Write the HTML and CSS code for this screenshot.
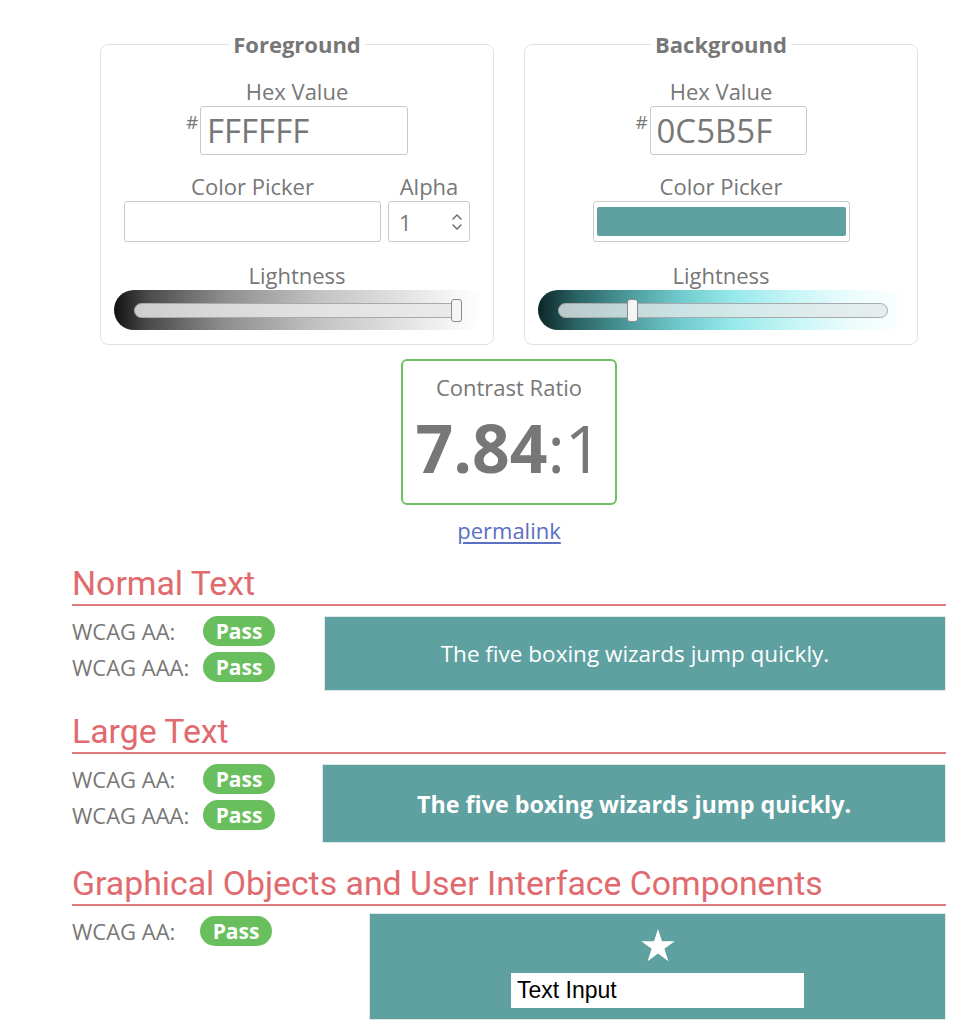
FILE: index.html
```html
<!DOCTYPE html>
<html lang="en">
<head>
<meta charset="utf-8">
<title>Contrast Checker</title>
<link rel="stylesheet" href="styles.css">
</head>
<body>
<main class="page">
  <div class="panels">
    <fieldset class="panel">
      <legend class="panel-title">Foreground</legend>
      <div class="label">Hex Value</div>
      <div class="hex-row">
        <span class="hash">#</span>
        <div class="hex-input hex-fg">FFFFFF</div>
      </div>
      <div class="picker-row">
        <div class="picker-col">
          <div class="label">Color Picker</div>
          <div class="swatch-box"></div>
        </div>
        <div class="alpha-col">
          <div class="label">Alpha</div>
          <div class="alpha-input">
            <span>1</span>
            <svg class="spin" width="12" height="24" viewBox="0 0 12 24" aria-hidden="true">
              <path d="M2 9 L6 5 L10 9" fill="none" stroke="#666" stroke-width="1.4" stroke-linecap="round" stroke-linejoin="round"/>
              <path d="M2 15 L6 19 L10 15" fill="none" stroke="#666" stroke-width="1.4" stroke-linecap="round" stroke-linejoin="round"/>
            </svg>
          </div>
        </div>
      </div>
      <div class="label label-light">Lightness</div>
      <div class="slider slider-fg">
        <div class="track track-fg">
          <div class="thumb" style="left: 316px"></div>
        </div>
      </div>
    </fieldset>

    <fieldset class="panel">
      <legend class="panel-title">Background</legend>
      <div class="label">Hex Value</div>
      <div class="hex-row">
        <span class="hash">#</span>
        <div class="hex-input hex-bg">0C5B5F</div>
      </div>
      <div class="picker-row">
        <div class="picker-col">
          <div class="label">Color Picker</div>
          <div class="swatch-box"><div class="swatch"></div></div>
        </div>
      </div>
      <div class="label label-light">Lightness</div>
      <div class="slider slider-bg">
        <div class="track track-bg">
          <div class="thumb" style="left: 68px"></div>
        </div>
      </div>
    </fieldset>
  </div>

  <div class="ratio-box">
    <div class="ratio-label">Contrast Ratio</div>
    <div class="ratio"><b>7.84</b>:1</div>
  </div>
  <div class="permalink-row"><a class="permalink" href="#">permalink</a></div>

  <section class="result">
    <h2 class="result-title">Normal Text</h2>
    <div class="result-body">
      <div class="checks">
        <div class="check"><span class="check-label">WCAG AA:</span><span class="pass">Pass</span></div>
        <div class="check"><span class="check-label">WCAG AAA:</span><span class="pass">Pass</span></div>
      </div>
      <div class="sample sample-normal">The five boxing wizards jump quickly.</div>
    </div>
  </section>

  <section class="result">
    <h2 class="result-title">Large Text</h2>
    <div class="result-body">
      <div class="checks">
        <div class="check"><span class="check-label">WCAG AA:</span><span class="pass">Pass</span></div>
        <div class="check"><span class="check-label">WCAG AAA:</span><span class="pass">Pass</span></div>
      </div>
      <div class="sample sample-large">The five boxing wizards jump quickly.</div>
    </div>
  </section>

  <section class="result">
    <h2 class="result-title">Graphical Objects and User Interface Components</h2>
    <div class="result-body">
      <div class="checks">
        <div class="check"><span class="check-label check-label-narrow">WCAG AA:</span><span class="pass">Pass</span></div>
      </div>
      <div class="sample sample-ui">
        <svg class="star" width="34" height="33" viewBox="0 0 34 33" aria-hidden="true">
          <polygon points="17,0 21,12.2 33.8,12.2 23.4,19.8 27.4,32.2 17,24.6 6.6,32.2 10.6,19.8 0.2,12.2 13,12.2" fill="#fff"/>
        </svg>
        <div class="text-input">Text Input</div>
      </div>
    </div>
  </section>
</main>
</body>
</html>
```

FILE: styles.css
```css
* { box-sizing: border-box; }

html, body {
  margin: 0;
  padding: 0;
  background: #fff;
}

body {
  font-family: "Open Sans", "DejaVu Sans", sans-serif;
  color: #777;
  font-size: 22px;
}

.page {
  width: 874px;
  margin-left: 72px;
  padding-top: 30px;
}

/* ---------- Panels ---------- */
.panels {
  display: flex;
  justify-content: center;
  gap: 30px;
}

.panel {
  width: 394px;
  margin: 0;
  padding: 19px 0 14px;
  border: 1px solid #e2e2e2;
  border-radius: 8px;
  min-inline-size: 0;
}

.panel-title {
  margin: 0 auto;
  padding: 0 4px;
  font-weight: 700;
  font-size: 22px;
  line-height: 28px;
  color: #777;
}

.label {
  text-align: center;
  font-size: 22px;
  line-height: 28px;
  color: #777;
  margin-bottom: 1px;
}

.label-light {
  margin-top: 19px;
}

.hex-row {
  display: flex;
  justify-content: center;
  align-items: flex-start;
  gap: 2px;
}

.hash {
  font-size: 19px;
  line-height: 20px;
  margin-top: 6px;
  width: 12px;
  text-align: center;
}

.hex-input {
  height: 49px;
  border: 1px solid #c9c9c9;
  border-radius: 3px;
  padding-left: 6px;
  font-size: 33px;
  line-height: 47px;
  color: #777;
  white-space: nowrap;
}

.hex-fg { width: 208px; }
.hex-bg { width: 157px; }

.picker-row {
  display: flex;
  justify-content: center;
  gap: 7px;
  margin-top: 17px;
}

.picker-col { width: 257px; }
.alpha-col { width: 82px; }

.swatch-box {
  height: 41px;
  border: 1px solid #c9c9c9;
  border-radius: 3px;
  padding: 5px 3px;
}

.swatch {
  height: 100%;
  background: #5fa0a1;
  border-radius: 2px;
}

.alpha-input {
  height: 41px;
  border: 1px solid #c9c9c9;
  border-radius: 3px;
  display: flex;
  align-items: center;
  justify-content: space-between;
  padding: 0 6px 0 10px;
  font-size: 22px;
  color: #777;
}

/* ---------- Sliders ---------- */
.slider {
  margin-left: 13px;
  width: 370px;
  height: 40px;
  border-radius: 20px;
  display: flex;
  align-items: center;
}

.slider-fg {
  background: linear-gradient(90deg, #111 0%, #4a4a4a 9%, #8e8e8e 30%, #c2c2c2 55%, #e2e2e2 78%, #f6f6f6 92%, #fff 100%);
}

.slider-bg {
  background: linear-gradient(90deg, #0c2526 0%, #2a6163 10%, #4b999b 24%, #6fc9cc 38%, #97e9ec 53%, #c4f4f5 68%, #eafcfc 84%, #fff 100%);
}

.track {
  position: relative;
  margin-left: 20px;
  height: 15px;
  border-radius: 8px;
  border: 1px solid #a9a9a9;
  background: rgba(232, 232, 232, 0.85);
}

.track-fg { width: 328px; }
.track-bg { width: 330px; background: rgba(225, 232, 232, 0.8); }

.thumb {
  position: absolute;
  top: -5px;
  width: 11px;
  height: 23px;
  border: 1.5px solid #8a8a8a;
  border-radius: 3px;
  background: #f5f5f5;
}

/* ---------- Contrast ratio ---------- */
.ratio-box {
  width: 216px;
  height: 146px;
  margin: 14px auto 0;
  border: 2.5px solid #6fc064;
  border-radius: 6px;
  text-align: center;
  padding-top: 12px;
}

.ratio-label {
  font-size: 22px;
  line-height: 28px;
}

.ratio {
  margin-top: 11px;
  font-size: 66px;
  line-height: 70px;
  color: #777;
  font-weight: 400;
}

.ratio b { font-weight: 700; }

.permalink-row {
  text-align: center;
  margin-top: 11px;
  line-height: 28px;
}

.permalink {
  color: #5b6fc3;
  font-size: 22px;
  text-decoration: underline;
  text-underline-offset: 3px;
}

/* ---------- Results ---------- */
.result { margin-top: 22px; }
.permalink-row + .result { margin-top: 21px; }

.result-title {
  margin: 0;
  font-family: Roboto, "Liberation Sans", sans-serif;
  font-weight: 400;
  font-size: 33.8px;
  line-height: 38px;
  color: #e06a6e;
  padding-bottom: 1px;
  border-bottom: 2px solid #e37a7d;
  white-space: nowrap;
}

.result-body {
  display: flex;
  align-items: flex-start;
  justify-content: space-between;
  margin-top: 10px;
}

.checks {
  display: flex;
  flex-direction: column;
  gap: 6px;
}

.check {
  display: flex;
  align-items: center;
  height: 30px;
}

.check-label {
  width: 131px;
  font-size: 22px;
  color: #777;
}

.check-label-narrow { width: 128px; }

.pass {
  display: inline-flex;
  align-items: center;
  justify-content: center;
  width: 72px;
  height: 30px;
  border-radius: 15px;
  background: #69bf5d;
  color: #fff;
  font-weight: 700;
  font-size: 21px;
}

.sample {
  background: #5fa0a1;
  border: 1px solid #dfe9e9;
  color: #fff;
  display: flex;
  align-items: center;
  justify-content: center;
}

.sample-normal {
  width: 622px;
  height: 75px;
  font-size: 22.5px;
}

.sample-large {
  width: 624px;
  height: 79px;
  font-size: 23.3px;
  font-weight: 700;
}

.sample-ui {
  width: 577px;
  height: 107px;
  margin-top: -3px;
  flex-direction: column;
  justify-content: flex-start;
  padding-top: 15px;
}

.star { display: block; }

.text-input {
  margin-top: 11px;
  width: 293px;
  height: 35px;
  background: #fff;
  color: #000;
  font-family: "Liberation Sans", Arial, sans-serif;
  font-size: 23px;
  line-height: 35px;
  padding-left: 6px;
}
```
